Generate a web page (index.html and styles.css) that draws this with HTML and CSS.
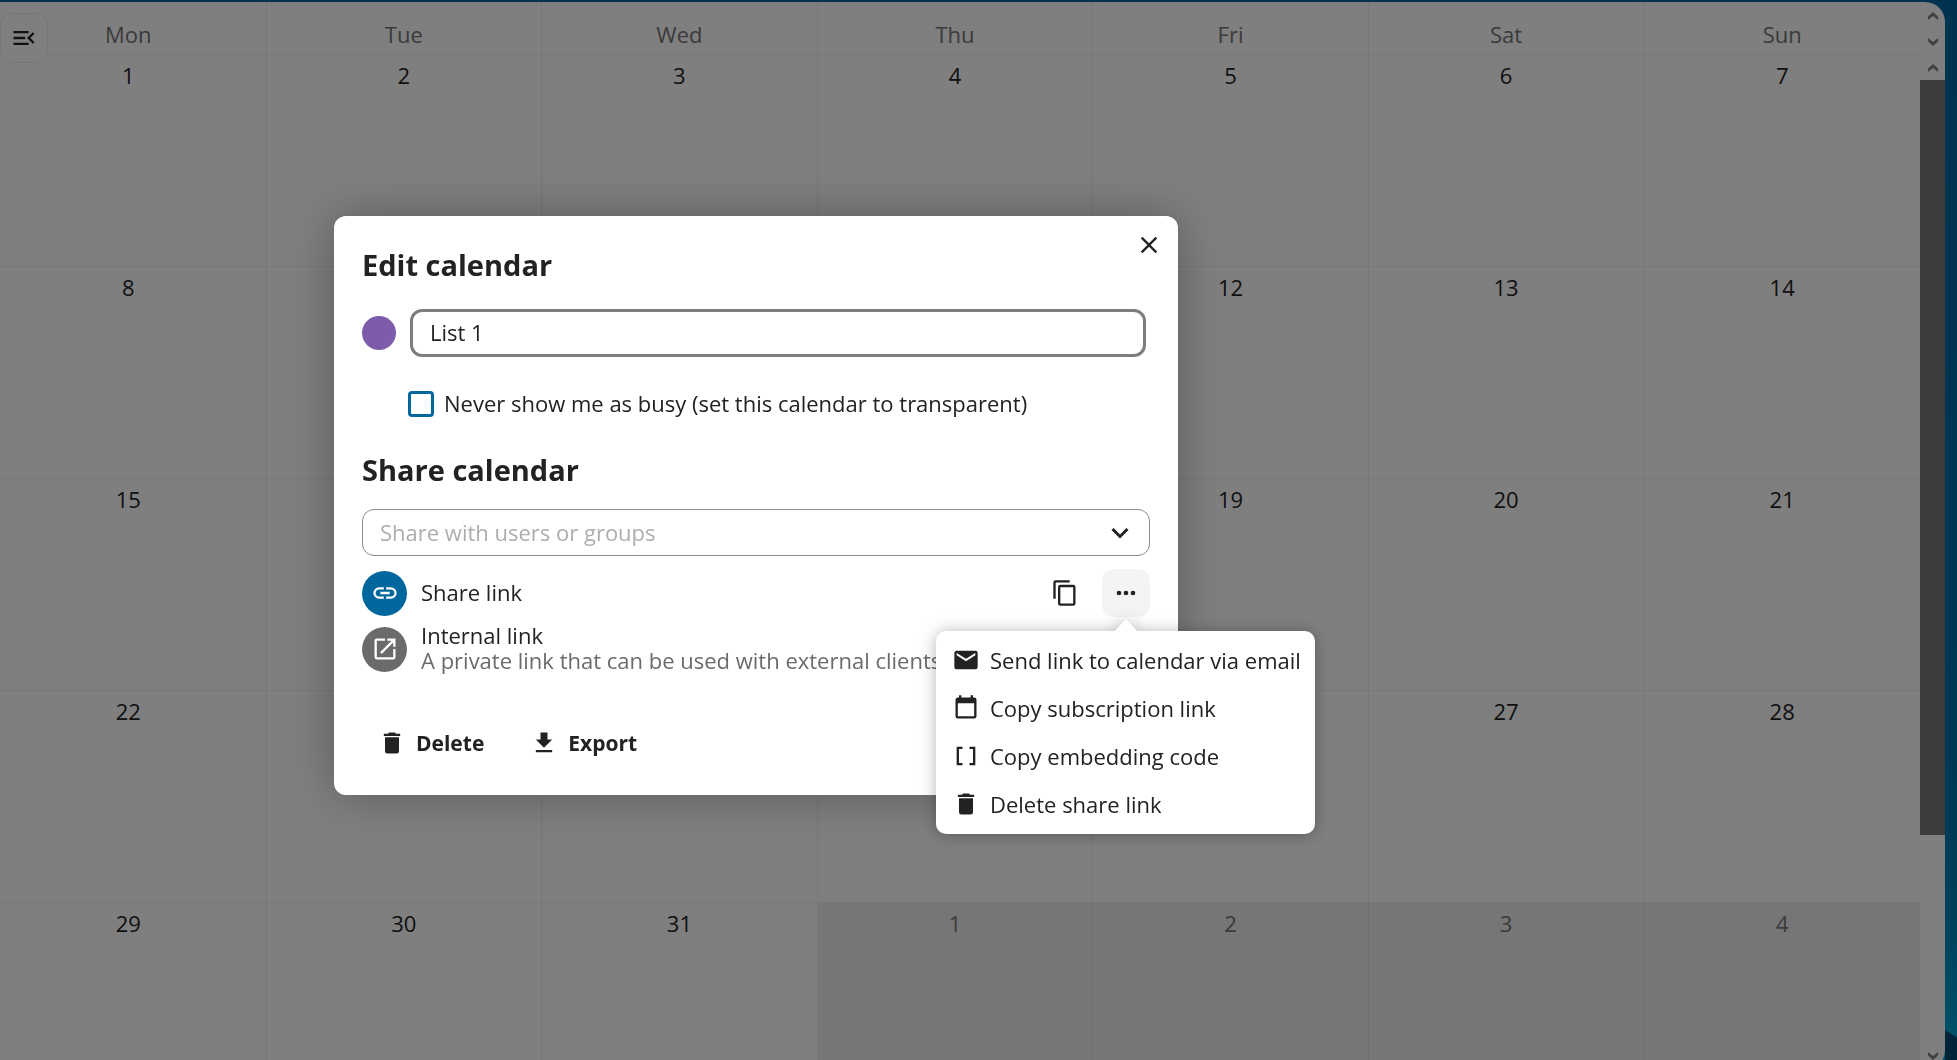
FILE: index.html
```html
<!DOCTYPE html>
<html lang="en">
<head>
<meta charset="utf-8">
<meta name="viewport" content="width=device-width, initial-scale=1">
<title>Calendar</title>
<link rel="stylesheet" href="styles.css">
</head>
<body>
<div class="app">
  <main class="content">
    <button class="nav-toggle" type="button" aria-label="Close navigation">
      <svg class="icon" viewBox="0 0 24 24"><path d="M21 15.61L19.59 17l-5.01-5 5.01-5L21 8.39 17.44 12 21 15.61M3 6h13v2H3V6m0 7v-2h10v2H3m0 5v-2h13v2H3z"/></svg>
    </button>
    <table class="month">
      <thead>
        <tr><th>Mon</th><th>Tue</th><th>Wed</th><th>Thu</th><th>Fri</th><th>Sat</th><th>Sun</th></tr>
      </thead>
      <tbody>
        <tr><td>1</td><td>2</td><td>3</td><td>4</td><td>5</td><td>6</td><td>7</td></tr>
        <tr><td>8</td><td></td><td></td><td></td><td>12</td><td>13</td><td>14</td></tr>
        <tr><td>15</td><td></td><td></td><td></td><td>19</td><td>20</td><td>21</td></tr>
        <tr><td>22</td><td></td><td></td><td></td><td></td><td>27</td><td>28</td></tr>
        <tr><td>29</td><td>30</td><td>31</td><td class="other">1</td><td class="other">2</td><td class="other">3</td><td class="other">4</td></tr>
      </tbody>
    </table>
  </main>
  <div class="scrollbars" aria-hidden="true">
    <div class="scrollbar scrollbar-head">
      <svg class="arrow" viewBox="0 0 10 8"><path d="M0 4.500L5 0l5 4.500V8L5 4 0 8z"/></svg>
      <svg class="arrow" viewBox="0 0 10 8"><path d="M0 3.500L5 8l5-4.500V0L5 4 0 0z"/></svg>
    </div>
    <div class="scrollbar scrollbar-body">
      <svg class="arrow" viewBox="0 0 10 8"><path d="M0 4.500L5 0l5 4.500V8L5 4 0 8z"/></svg>
      <div class="track"><div class="thumb"></div></div>
      <svg class="arrow" viewBox="0 0 10 8"><path d="M0 3.500L5 8l5-4.500V0L5 4 0 0z"/></svg>
    </div>
  </div>
</div>

<div class="overlay">
  <section class="modal" role="dialog" aria-labelledby="edit-title">
    <button class="close" type="button" aria-label="Close">
      <svg class="icon" viewBox="0 0 24 24"><path d="M19 6.410L17.590 5 12 10.590 6.410 5 5 6.410 10.590 12 5 17.590 6.410 19 12 13.410 17.590 19 19 17.590 13.410 12z"/></svg>
    </button>
    <h2 class="title" id="edit-title">Edit calendar</h2>
    <div class="name-row">
      <button class="color" type="button" aria-label="Calendar color"></button>
      <input class="name" type="text" value="List 1" aria-label="Calendar name">
    </div>
    <div class="busy-row">
      <input class="checkbox" type="checkbox" id="transparent">
      <label class="busy-label" for="transparent">Never show me as busy (set this calendar to transparent)</label>
    </div>
    <h2 class="title">Share calendar</h2>
    <div class="search">
      <input class="search-input" type="text" placeholder="Share with users or groups" aria-label="Share with users or groups">
      <svg class="chevron" viewBox="0 0 18 12"><path d="M1.500 2L9 9.500 16.500 2"/></svg>
    </div>
    <ul class="shares">
      <li class="share">
        <span class="avatar avatar-link"><svg class="icon" viewBox="0 0 24 24"><path d="M3.900 12c0-1.710 1.390-3.100 3.100-3.100h4V7H7a5 5 0 0 0-5 5 5 5 0 0 0 5 5h4v-1.900H7c-1.710 0-3.100-1.390-3.100-3.100M8 13h8v-2H8v2m9-6h-4v1.900h4c1.710 0 3.100 1.390 3.100 3.100s-1.390 3.100-3.100 3.100h-4V17h4a5 5 0 0 0 5-5 5 5 0 0 0-5-5z"/></svg></span>
        <span class="share-text">Share link</span>
        <span class="actions">
          <button class="action" type="button" aria-label="Copy public link"><svg class="icon" viewBox="0 0 24 24"><path d="M19 21H8V7h11m0-2H8a2 2 0 0 0-2 2v14a2 2 0 0 0 2 2h11a2 2 0 0 0 2-2V7a2 2 0 0 0-2-2m-3-4H4a2 2 0 0 0-2 2v14h2V3h12V1z"/></svg></button>
          <button class="action action-open" type="button" aria-label="Actions" aria-expanded="true"><svg class="icon" viewBox="0 0 24 24"><path d="M16 12a2 2 0 0 1 2-2 2 2 0 0 1 2 2 2 2 0 0 1-2 2 2 2 0 0 1-2-2m-6 0a2 2 0 0 1 2-2 2 2 0 0 1 2 2 2 2 0 0 1-2 2 2 2 0 0 1-2-2m-6 0a2 2 0 0 1 2-2 2 2 0 0 1 2 2 2 2 0 0 1-2 2 2 2 0 0 1-2-2z"/></svg></button>
          <span class="menu" role="menu">
            <button class="menu-item" type="button" role="menuitem"><svg class="icon" viewBox="0 0 24 24"><path d="M20 8l-8 5-8-5V6l8 5 8-5m0-2H4c-1.110 0-2 .89-2 2v12a2 2 0 0 0 2 2h16a2 2 0 0 0 2-2V6a2 2 0 0 0-2-2z"/></svg>Send link to calendar via email</button>
            <button class="menu-item" type="button" role="menuitem"><svg class="icon" viewBox="0 0 24 24"><path d="M19 19H5V8h14m-3-7v2H8V1H6v2H5c-1.110 0-2 .89-2 2v14a2 2 0 0 0 2 2h14a2 2 0 0 0 2-2V5a2 2 0 0 0-2-2h-1V1"/></svg>Copy subscription link</button>
            <button class="menu-item" type="button" role="menuitem"><svg class="icon" viewBox="0 0 24 24"><path d="M15 4v2h3v12h-3v2h5V4M4 4v16h5v-2H6V6h3V4H4z"/></svg>Copy embedding code</button>
            <button class="menu-item" type="button" role="menuitem"><svg class="icon" viewBox="0 0 24 24"><path d="M19 4h-3.500l-1-1h-5l-1 1H5v2h14M6 19a2 2 0 0 0 2 2h8a2 2 0 0 0 2-2V7H6v12z"/></svg>Delete share link</button>
          </span>
        </span>
      </li>
      <li class="share">
        <span class="avatar avatar-internal"><svg class="icon" viewBox="0 0 24 24"><path d="M14 3v2h3.590l-9.830 9.830 1.410 1.410L19 6.410V10h2V3m-2 16H5V5h7V3H5a2 2 0 0 0-2 2v14a2 2 0 0 0 2 2h14a2 2 0 0 0 2-2v-7h-2v7z"/></svg></span>
        <span class="share-text">Internal link<span class="hint">A private link that can be used with external clients</span></span>
      </li>
    </ul>
    <div class="footer">
      <button class="foot-button" type="button"><svg class="icon" viewBox="0 0 24 24"><path d="M19 4h-3.500l-1-1h-5l-1 1H5v2h14M6 19a2 2 0 0 0 2 2h8a2 2 0 0 0 2-2V7H6v12z"/></svg>Delete</button>
      <button class="foot-button" type="button"><svg class="icon" viewBox="0 0 24 24"><path d="M5 20h14v-2H5m14-9h-4V3H9v6H5l7 7 7-7z"/></svg>Export</button>
    </div>
  </section>
</div>
</body>
</html>
```

FILE: styles.css
```css
* { box-sizing: border-box; }

body {
  margin: 0;
  height: 100vh;
  overflow: hidden;
  font: 22px/24px "Open Sans", "Noto Sans", sans-serif;
  color: #222;
  background: linear-gradient(#0066a0 0%, #006eaa 70%, #0080b4 85%, #00a6d8 100%);
}

body::before {
  content: "";
  position: fixed;
  right: 0;
  bottom: 0;
  width: 12px;
  height: 30px;
  background: #004a70;
  clip-path: polygon(0 0, 100% 24%, 100% 100%, 0 100%);
}

button, input {
  font: inherit;
  color: inherit;
}

button {
  margin: 0;
  padding: 0;
  border: 0;
  background: none;
}

.icon {
  width: 28px;
  height: 28px;
  flex: none;
  fill: currentColor;
}

/* Month view */
.app {
  position: relative;
  display: flex;
  height: calc(100vh + 8px);
  margin: 2px 12px 0 0;
  border-radius: 0 20px 20px 0;
  background: #fff;
  overflow: hidden;
}

.content {
  flex: 1;
  min-width: 0;
}

.nav-toggle {
  position: absolute;
  top: 11px;
  left: 0;
  display: flex;
  align-items: center;
  justify-content: center;
  width: 48px;
  height: 50px;
  border: 1px solid #ededed;
  border-radius: 12px;
  background: #fff;
}

.month {
  width: calc(100% + 9px);
  margin-left: -9px;
  table-layout: fixed;
  border-collapse: separate;
  border-spacing: 0;
}

.month th {
  height: 53px;
  padding: 12px 0 0;
  border: solid #efefef;
  border-width: 0 1px 1px 0;
  font-weight: 400;
  color: #767676;
}

.month td {
  height: 212px;
  padding: 8px 0 0;
  border: solid #efefef;
  border-width: 0 1px 1px 0;
  text-align: center;
  vertical-align: top;
}

.month th:last-child,
.month td:last-child { border-right: 0; }

.month .other {
  background: #ececec;
  border-color: #dfdfdf;
  color: #767676;
}

.scrollbars {
  display: flex;
  flex-direction: column;
  width: 25px;
}

.scrollbar {
  display: flex;
  flex-direction: column;
  align-items: center;
  justify-content: space-between;
}

.scrollbar-head {
  height: 52px;
  padding: 10px 0 8px;
}

.scrollbar-body {
  flex: 1;
  padding: 10px 0;
}

.arrow {
  width: 10px;
  height: 8px;
  fill: #828282;
}

.track {
  flex: 1;
  width: 100%;
  padding: 8px 0;
}

.thumb {
  height: calc(78% + 3px);
  background: #797979;
}

/* Edit dialog */
.overlay {
  position: fixed;
  inset: 0;
  display: flex;
  align-items: flex-start;
  padding: 216px 0 0 334px;
  background: rgba(0, 0, 0, 0.5);
}

.modal {
  position: relative;
  width: 844px;
  padding: 31px 28px 28px;
  border-radius: 12px;
  background: #fff;
  box-shadow: 0 0 48px rgba(0, 0, 0, 0.3);
}

.close {
  position: absolute;
  top: 5px;
  right: 5px;
  display: flex;
  align-items: center;
  justify-content: center;
  width: 48px;
  height: 48px;
}

.title {
  margin: 0;
  font-size: 29px;
  line-height: 36px;
  font-weight: 700;
}

.name-row {
  display: flex;
  align-items: center;
  gap: 14px;
  margin-top: 26px;
  padding-right: 4px;
}

.color {
  width: 34px;
  height: 34px;
  flex: none;
  border-radius: 50%;
  background: #7c5cab;
}

.name {
  flex: 1;
  min-width: 0;
  height: 48px;
  padding: 0 17px 2px;
  border: 3px solid #7d7d7d;
  border-radius: 12px;
  background: #fff;
}

.busy-row {
  display: flex;
  align-items: center;
  gap: 10px;
  margin: 34px 0 35px 46px;
}

.busy-label { padding-bottom: 2px; }

.checkbox {
  appearance: none;
  width: 26px;
  height: 26px;
  margin: 0;
  flex: none;
  border: 3px solid #00679e;
  border-radius: 4px;
}

.search {
  display: flex;
  align-items: center;
  height: 47px;
  margin-top: 21px;
  padding: 0 20px 0 17px;
  border: 1px solid #8c8c8c;
  border-radius: 12px;
}

.search-input {
  flex: 1;
  min-width: 0;
  height: 36px;
  padding: 0 0 2px;
  border: 0;
  outline: 0;
  background: none;
  line-height: 32px;
}

.search-input::placeholder {
  color: #adadad;
  opacity: 1;
}

.chevron {
  width: 18px;
  height: 12px;
  fill: none;
  stroke: #222;
  stroke-width: 3;
}

.shares {
  display: flex;
  flex-direction: column;
  gap: 4px;
  margin: 11px 0 0;
  padding: 0;
  list-style: none;
}

.share {
  display: flex;
  align-items: center;
  gap: 14px;
  min-height: 52px;
}

.share-text {
  display: flex;
  flex-direction: column;
  padding-bottom: 2px;
  line-height: 25px;
}

.hint { color: #6b6b6b; }

.avatar {
  display: flex;
  align-items: center;
  justify-content: center;
  width: 45px;
  height: 45px;
  flex: none;
  border-radius: 50%;
  color: #fff;
}

.avatar-link { background: #00679e; }
.avatar-internal { background: #6b6b6b; }

.actions {
  position: relative;
  display: flex;
  gap: 13px;
  margin-left: auto;
}

.action {
  display: flex;
  align-items: center;
  justify-content: center;
  width: 48px;
  height: 48px;
  border-radius: 12px;
}

.action-open { background: #f4f4f4; }

.menu {
  position: absolute;
  top: 62px;
  right: -165px;
  z-index: 1;
  display: flex;
  flex-direction: column;
  width: 379px;
  padding: 5px 0 6px;
  border-radius: 10px;
  background: #fff;
  filter: drop-shadow(0 1px 8px rgba(0, 0, 0, 0.3));
}

.menu::before {
  content: "";
  position: absolute;
  top: -12px;
  right: 177px;
  width: 24px;
  height: 13px;
  background: #fff;
  clip-path: polygon(50% 0, 100% 100%, 0 100%);
}

.menu-item {
  display: flex;
  align-items: center;
  gap: 10px;
  height: 48px;
  padding-left: 16px;
  white-space: nowrap;
}

.footer {
  display: flex;
  gap: 14px;
  margin-top: 44px;
}

.foot-button {
  display: flex;
  align-items: center;
  gap: 10px;
  height: 48px;
  padding: 0 16px;
  font-size: 21px;
  font-weight: 700;
}
```
